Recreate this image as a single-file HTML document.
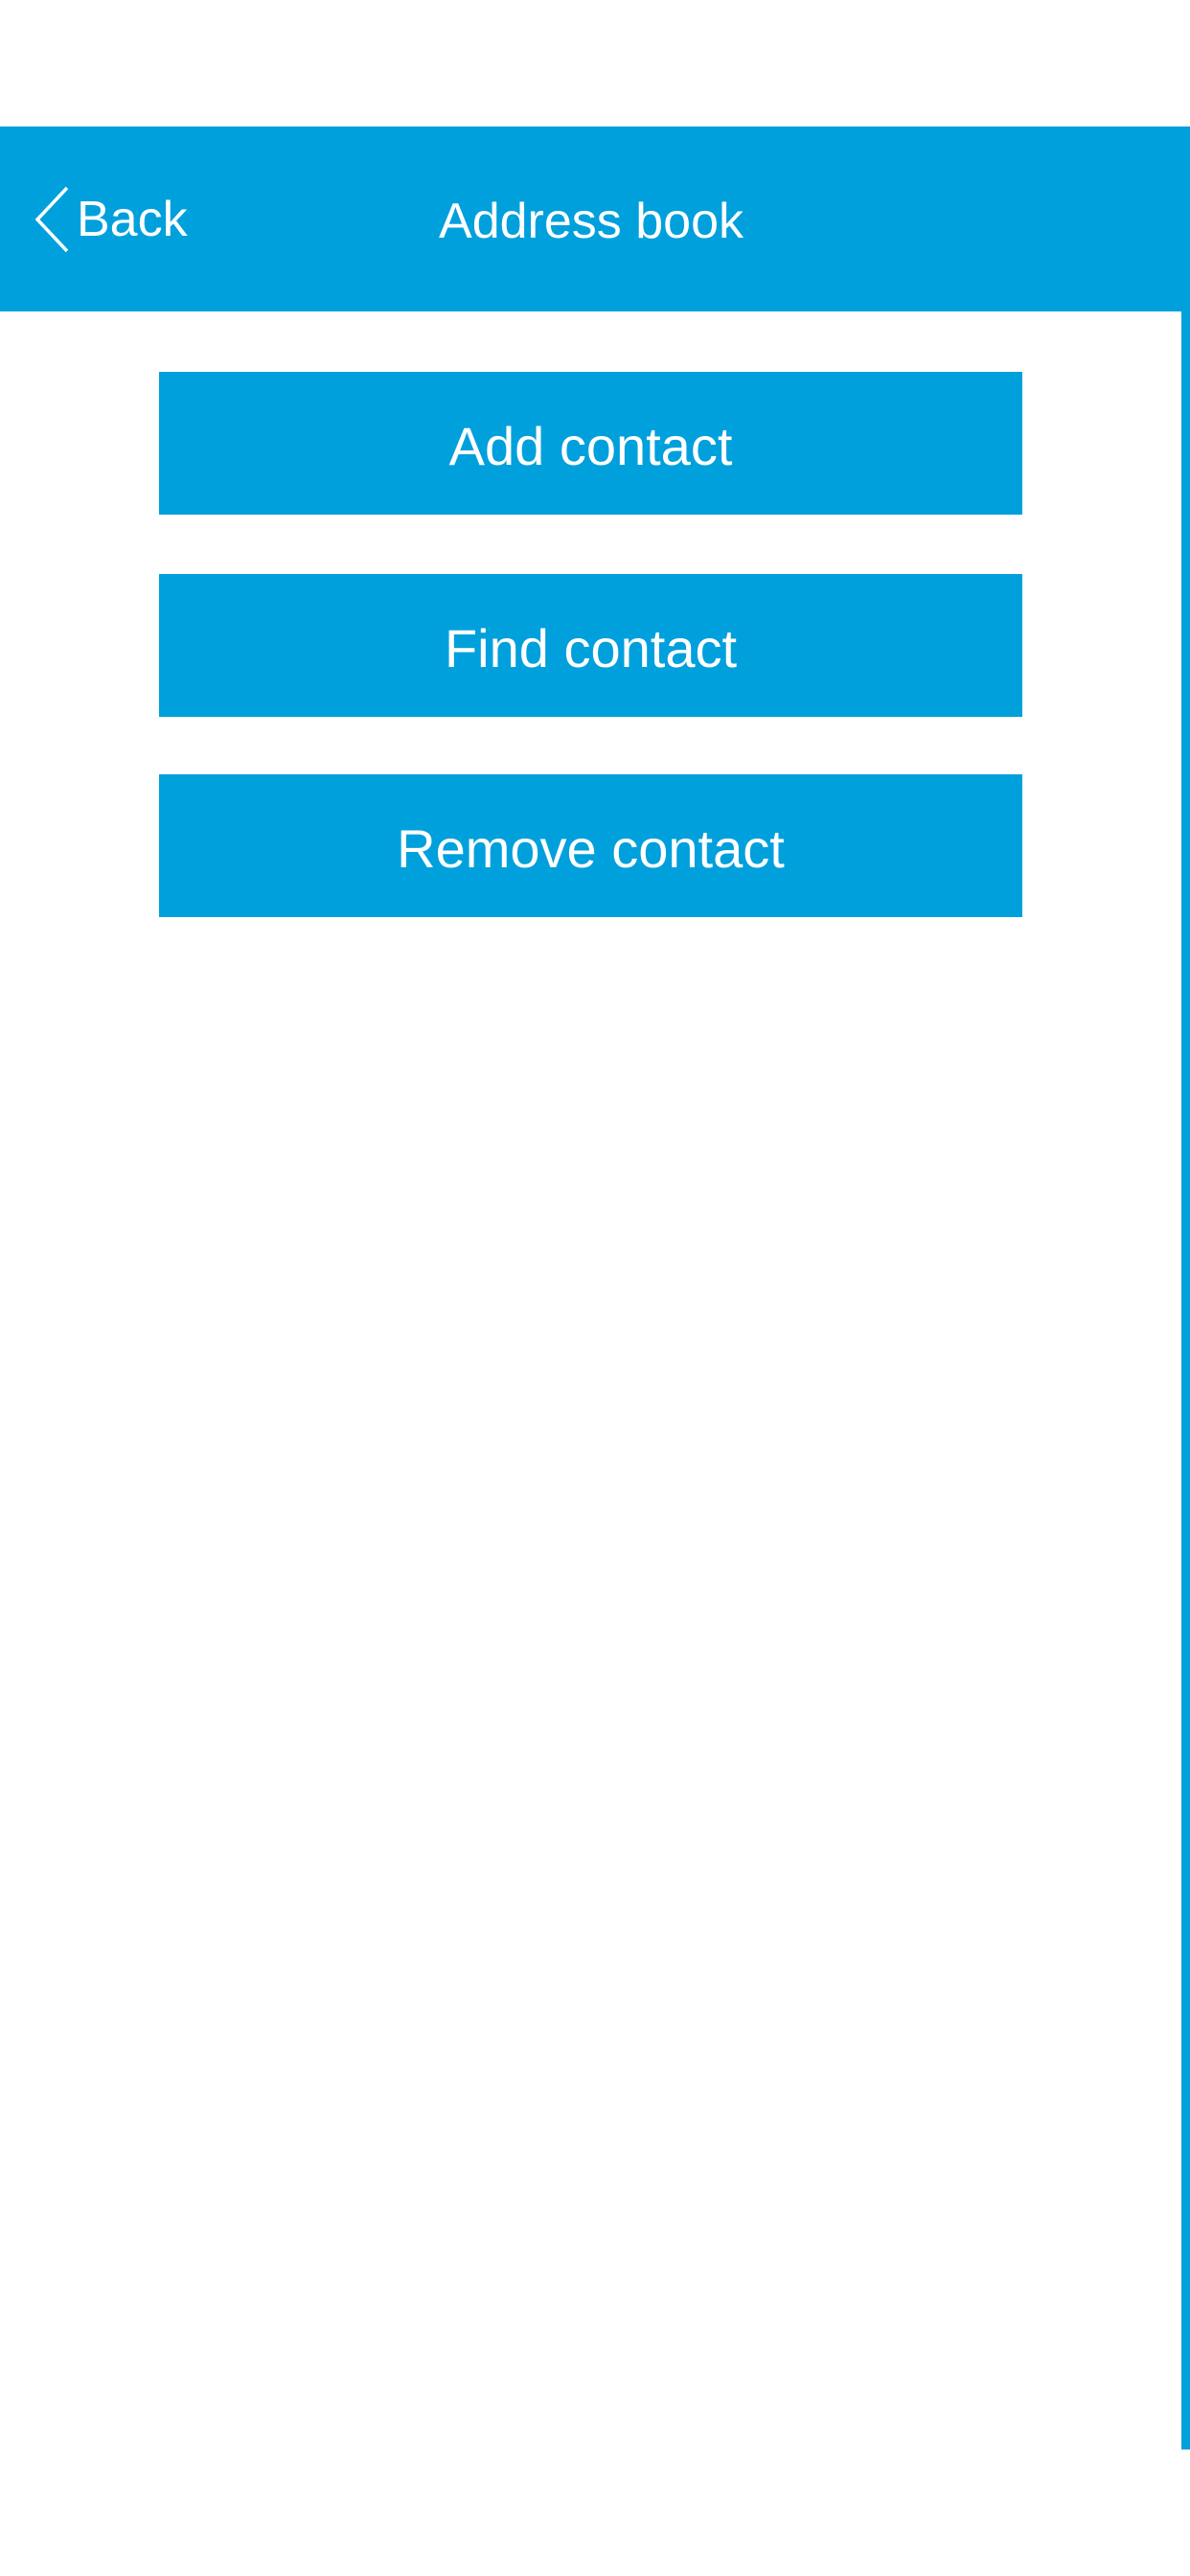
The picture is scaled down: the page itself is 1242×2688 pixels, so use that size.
<!DOCTYPE html>
<html><head><meta charset="utf-8"><style>
html,body{margin:0;padding:0;background:#fff;width:1242px;height:2688px;overflow:hidden;font-family:"Liberation Sans",sans-serif;}
.hdr{position:absolute;left:0;top:132px;width:1242px;height:193px;background:#00a0dc;}
.title{position:absolute;left:0;width:1234px;top:0;height:193px;line-height:199px;text-align:center;color:#fff;font-size:52px;}
.back{position:absolute;left:80px;top:0;height:193px;line-height:195px;color:#fff;font-size:52px;}
.btn{position:absolute;left:166px;width:901px;height:149px;background:#00a0dc;color:#fff;font-size:56px;text-align:center;line-height:155px;}
.bar{position:absolute;left:1233px;top:325px;width:9px;height:2231px;background:#00a0dc;}
</style></head><body>
<div class="hdr">
<svg style="position:absolute;left:30px;top:60px" width="46" height="74" viewBox="0 0 46 74"><path d="M40 4 L9 37 L40 70" fill="none" stroke="#fff" stroke-width="3.5"/></svg>
<div class="back">Back</div>
<div class="title">Address book</div>
</div>
<div class="bar"></div>
<div class="btn" style="top:388px">Add contact</div>
<div class="btn" style="top:599px">Find contact</div>
<div class="btn" style="top:808px">Remove contact</div>
</body></html>
